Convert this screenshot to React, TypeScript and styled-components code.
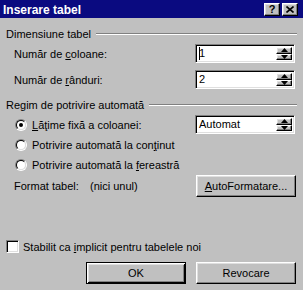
import React from 'react';
import styled, { createGlobalStyle, css } from 'styled-components';

const Global = createGlobalStyle`
  html, body { margin: 0; padding: 0; background: #c0c0c0; }
  body {
    font-family: "Liberation Sans", Arial, sans-serif;
    font-size: 11px;
    color: #000;
    -webkit-font-smoothing: none;
  }
  u { text-decoration: underline; text-underline-offset: 1px; }
`;

const raised = css`
  border: 1px solid;
  border-color: #fff #000 #000 #fff;
  box-shadow: inset -1px -1px #808080, inset 1px 1px #dfdfdf;
  background: #c0c0c0;
`;

const sunken = css`
  border: 1px solid;
  border-color: #808080 #fff #fff #808080;
  box-shadow: inset 1px 1px #000, inset -1px -1px #dfdfdf;
  background: #fff;
`;

const Window = styled.div`
  width: 303px;
  height: 290px;
  background: #c0c0c0;
  display: flex;
  flex-direction: column;
  overflow: hidden;
`;

const TitleBar = styled.div`
  height: 18px;
  flex: none;
  background: #0a0a80;
  display: flex;
  align-items: center;
  padding: 1px 5px 0 3px;
  box-sizing: border-box;
  gap: 3px;
`;

const Title = styled.div`
  flex: 1;
  color: #fff;
  font-weight: bold;
  font-size: 12px;
  line-height: 14px;
`;

const CaptionButton = styled.div`
  ${raised};
  width: 16px;
  height: 13px;
  box-sizing: border-box;
  display: flex;
  align-items: center;
  justify-content: center;
  font-weight: bold;
  font-size: 11px;
  line-height: 11px;
  color: #000;
`;

const Body = styled.div`
  display: flex;
  flex-direction: column;
  padding: 9px 6px 0 6px;
`;

const GroupHeader = styled.div`
  height: 14px;
  display: flex;
  align-items: center;
  gap: 5px;
  margin-top: ${(p: { $mt?: number }) => p.$mt ?? 0}px;
  &::after {
    content: '';
    flex: 1;
    height: 0;
    border-top: 1px solid #808080;
    border-bottom: 1px solid #fff;
  }
`;

const Row = styled.div<{ $mt?: number; $h: number; $pl?: number }>`
  display: flex;
  align-items: center;
  height: ${(p) => p.$h}px;
  margin-top: ${(p) => p.$mt ?? 0}px;
  padding-left: ${(p) => p.$pl ?? 0}px;
`;

const Label = styled.span<{ $w?: number }>`
  flex: ${(p) => (p.$w ? 'none' : '1')};
  width: ${(p) => (p.$w ? `${p.$w}px` : 'auto')};
  white-space: nowrap;
`;

const SpinBox = styled.div`
  ${sunken};
  width: 100px;
  height: 19px;
  box-sizing: border-box;
  margin-right: 2px;
  display: flex;
  align-items: stretch;
  padding: 2px;
`;

const SpinText = styled.div`
  flex: 1;
  display: flex;
  align-items: center;
  padding-left: 1px;
  line-height: 13px;
`;

const Caret = styled.span`
  display: inline-block;
  width: 1px;
  height: 13px;
  background: #000;
  margin-right: -1px;
`;

const SpinButtons = styled.div`
  width: 16px;
  display: flex;
  flex-direction: column;
`;

const SpinButton = styled.div`
  ${raised};
  flex: 1;
  box-sizing: border-box;
  display: flex;
  align-items: center;
  justify-content: center;
`;

const Radio = styled.span<{ $checked?: boolean }>`
  position: relative;
  width: 12px;
  height: 12px;
  box-sizing: border-box;
  border-radius: 50%;
  border: 1px solid;
  border-color: #808080 #fff #fff #808080;
  display: flex;
  align-items: center;
  justify-content: center;
  flex: none;
  margin-right: 5px;
  &::before {
    content: '';
    width: 10px;
    height: 10px;
    box-sizing: border-box;
    border-radius: 50%;
    border: 1px solid;
    border-color: #000 #dfdfdf #dfdfdf #000;
    background: #fff;
  }
  &::after {
    content: '';
    position: absolute;
    width: 4px;
    height: 4px;
    border-radius: 50%;
    background: #000;
    display: ${(p) => (p.$checked ? 'block' : 'none')};
  }
`;

const Button = styled.div<{ $default?: boolean }>`
  width: 100px;
  height: 22px;
  box-sizing: border-box;
  display: flex;
  align-items: center;
  justify-content: center;
  ${(p) =>
    p.$default
      ? css`
          border: 1px solid #000;
          background: #c0c0c0;
          box-shadow: inset 1px 1px #fff, inset -1px -1px #000, inset 2px 2px #dfdfdf, inset -2px -2px #808080;
        `
      : raised};
`;

const Checkbox = styled.span`
  ${sunken};
  width: 13px;
  height: 13px;
  box-sizing: border-box;
  flex: none;
  margin-right: 4px;
`;

const ButtonRow = styled.div`
  display: flex;
  justify-content: flex-end;
  gap: 10px;
  margin-top: 9px;
  padding-right: 1px;
`;

const Arrow = ({ up }: { up?: boolean }) => (
  <svg width="7" height="4" viewBox="0 0 7 4">
    {up ? <path d="M3.5 0 L7 4 L0 4 Z" fill="#000" /> : <path d="M0 0 L7 0 L3.5 4 Z" fill="#000" />}
  </svg>
);

const Spin: React.FC<{ children: React.ReactNode }> = ({ children }) => (
  <SpinBox>
    <SpinText>{children}</SpinText>
    <SpinButtons>
      <SpinButton>
        <Arrow up />
      </SpinButton>
      <SpinButton>
        <Arrow />
      </SpinButton>
    </SpinButtons>
  </SpinBox>
);

export default function App() {
  return (
    <>
      <Global />
      <Window>
        <TitleBar>
          <Title>Inserare tabel</Title>
          <CaptionButton>?</CaptionButton>
          <CaptionButton style={{ marginLeft: -1 }}>
            <svg width="8" height="7" viewBox="0 0 8 7">
              <path d="M0.5 0.5 L7.5 6.5 M7.5 0.5 L0.5 6.5" stroke="#000" strokeWidth="1.6" />
            </svg>
          </CaptionButton>
        </TitleBar>
        <Body>
          <GroupHeader>Dimensiune tabel</GroupHeader>
          <Row $h={19} $mt={3} $pl={8}>
            <Label>
              Număr de <u>c</u>oloane:
            </Label>
            <Spin>
              <Caret />1
            </Spin>
          </Row>
          <Row $h={19} $mt={7} $pl={8}>
            <Label>
              Număr de <u>r</u>ânduri:
            </Label>
            <Spin>2</Spin>
          </Row>
          <GroupHeader $mt={9}>Regim de potrivire automată</GroupHeader>
          <Row $h={19} $mt={3} $pl={9}>
            <Radio $checked />
            <Label>
              <u>L</u>ăţime fixă a coloanei:
            </Label>
            <Spin>Automat</Spin>
          </Row>
          <Row $h={20} $mt={1} $pl={9}>
            <Radio />
            <Label>
              Potrivire automată la con<u>ţ</u>inut
            </Label>
          </Row>
          <Row $h={19} $pl={9}>
            <Radio />
            <Label>
              Potrivire automată la <u>f</u>ereastră
            </Label>
          </Row>
          <Row $h={22} $mt={1} $pl={8}>
            <Label $w={76}>Format tabel:</Label>
            <Label>(nici unul)</Label>
            <Button style={{ marginRight: 1 }}>
              <span>
                <u>A</u>utoFormatare...
              </span>
            </Button>
          </Row>
          <Row $h={13} $mt={43}>
            <Checkbox />
            <Label>
              Stabilit ca <u>i</u>mplicit pentru tabelele noi
            </Label>
          </Row>
          <ButtonRow>
            <Button $default>OK</Button>
            <Button>Revocare</Button>
          </ButtonRow>
        </Body>
      </Window>
    </>
  );
}
